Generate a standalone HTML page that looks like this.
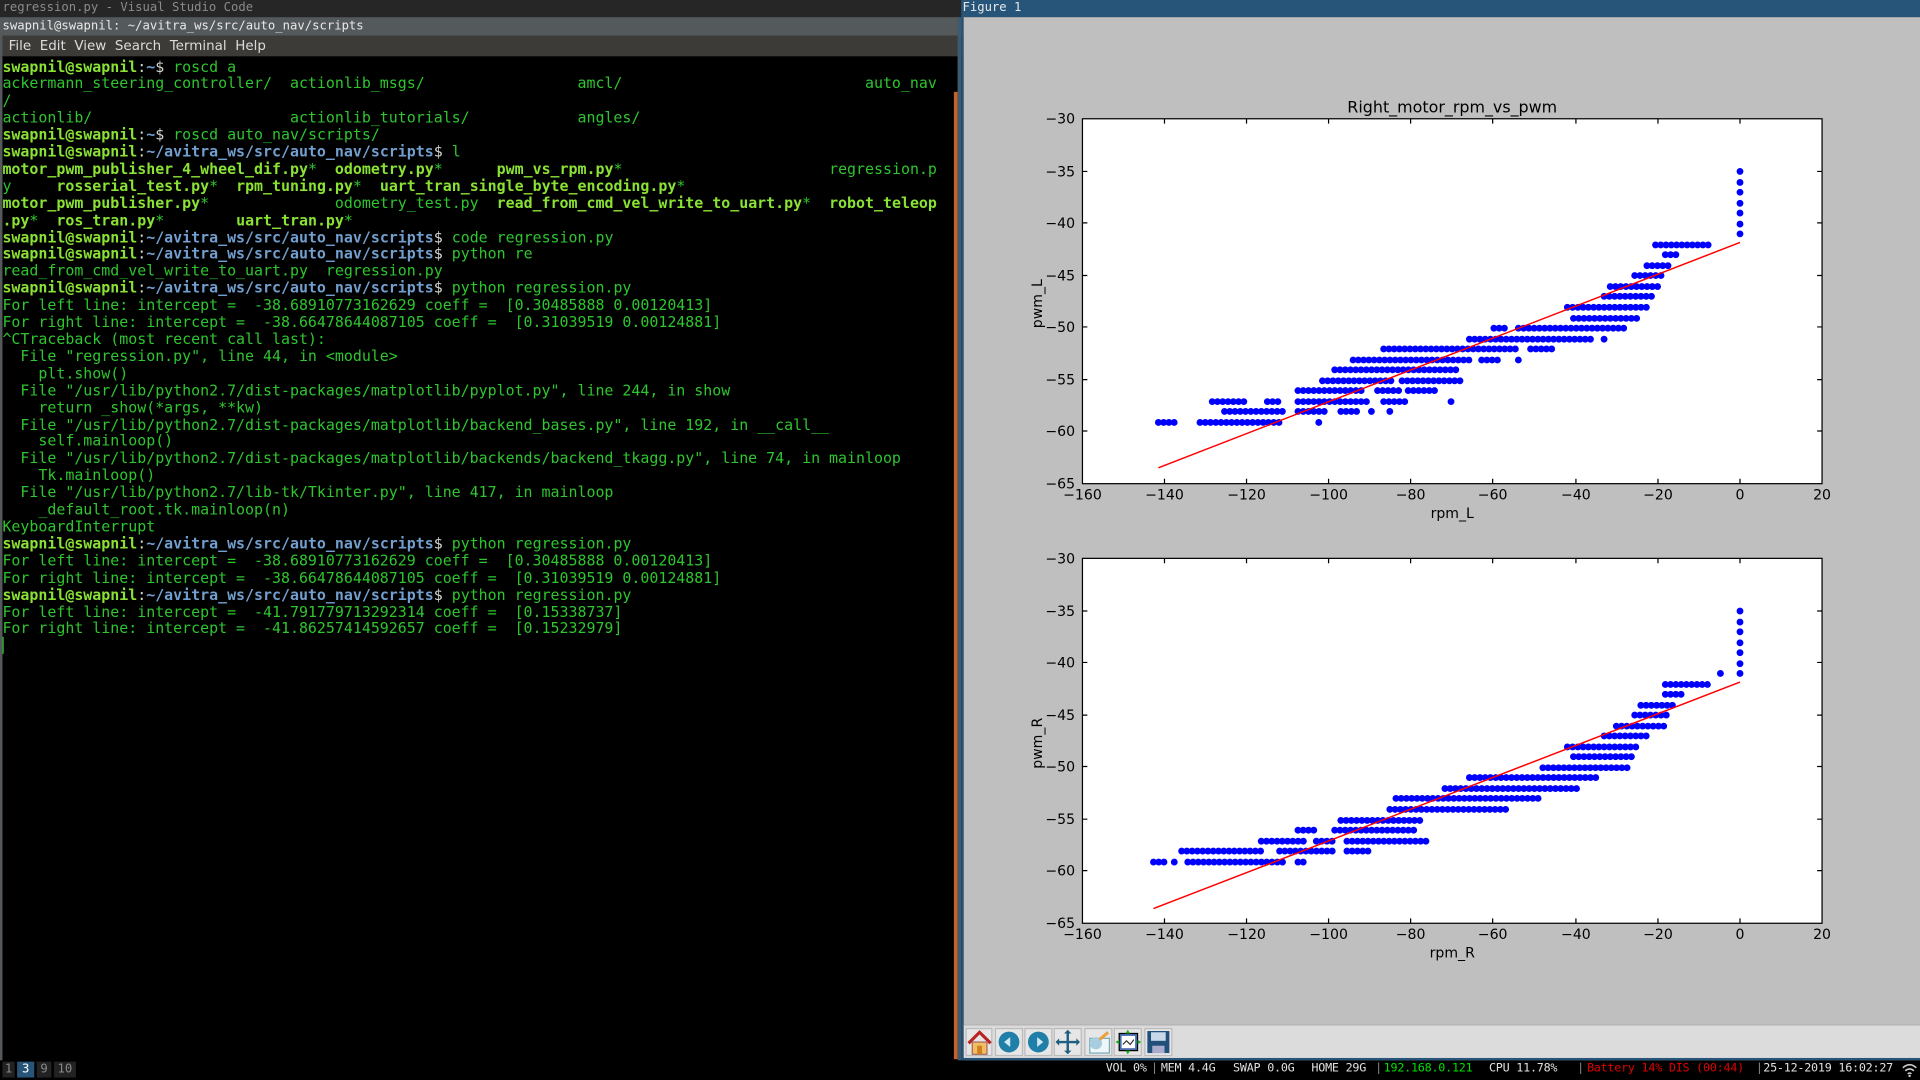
<!DOCTYPE html>
<html><head><meta charset="utf-8"><style>
html,body{margin:0;padding:0;background:#000;overflow:hidden;width:1920px;height:1080px}
#w{position:absolute;left:0;top:0;width:1568px;height:882px;transform:scale(1.224490);transform-origin:0 0;background:#000;font-family:"DejaVu Sans Mono","Liberation Mono",monospace}
.abs{position:absolute}
#term pre{margin:0;position:absolute;left:2px;top:48.5px;font-family:"DejaVu Sans Mono",monospace;font-size:12.2px;line-height:13.9px;color:#2fc52f;white-space:pre}
.p{color:#8ae234;font-weight:bold}.b{color:#729fcf;font-weight:bold}.y{color:#8ae234;font-weight:bold}.w{color:#d3d7cf}
#st span{position:absolute;top:867px;font-size:9.6px;color:#e0e0e0;letter-spacing:-0.2px}
</style></head><body><div id="w">
<div class="abs" style="left:0;top:0;width:785px;height:14px;background:#262626;color:#8a8a8a;font-size:10px;line-height:14px;padding-left:2px">regression.py - Visual Studio Code</div>
<div class="abs" style="left:0;top:14px;width:785px;height:15px;background:#545a5c;color:#e8e8e8;font-size:10px;line-height:15px;padding-left:2px">swapnil@swapnil: ~/avitra_ws/src/auto_nav/scripts</div>
<div class="abs" style="left:0;top:29px;width:783px;height:17px;background:#3c3b37;border-left:2px solid #545a5c;color:#dcdcdc;font-family:'DejaVu Sans',sans-serif;font-size:11px;line-height:17px"><span style="margin-left:5px">File</span>&nbsp; Edit&nbsp; View&nbsp; Search&nbsp; Terminal&nbsp; Help</div>
<div class="abs" style="left:0;top:46px;width:2px;height:820px;background:#545a5c"></div>
<div class="abs" style="left:779px;top:75px;width:3px;height:790px;background:#c8602a"></div>
<div class="abs" style="left:782px;top:14px;width:3px;height:852px;background:#3d5a6e"></div>
<div id="term"><pre><span class="p">swapnil@swapnil</span><span class="w">:</span><span class="b">~</span><span class="w">$ </span>roscd a
ackermann_steering_controller/  actionlib_msgs/                 amcl/                           auto_nav
/
actionlib/                      actionlib_tutorials/            angles/
<span class="p">swapnil@swapnil</span><span class="w">:</span><span class="b">~</span><span class="w">$ </span>roscd auto_nav/scripts/
<span class="p">swapnil@swapnil</span><span class="w">:</span><span class="b">~/avitra_ws/src/auto_nav/scripts</span><span class="w">$ </span>l
<span class="y">motor_pwm_publisher_4_wheel_dif.py</span>*  <span class="y">odometry.py</span>*      <span class="y">pwm_vs_rpm.py</span>*                       regression.p
y     <span class="y">rosserial_test.py</span>*  <span class="y">rpm_tuning.py</span>*  <span class="y">uart_tran_single_byte_encoding.py</span>*
<span class="y">motor_pwm_publisher.py</span>*              odometry_test.py  <span class="y">read_from_cmd_vel_write_to_uart.py</span>*  <span class="y">robot_teleop</span>
<span class="y">.py</span>*  <span class="y">ros_tran.py</span>*        <span class="y">uart_tran.py</span>*
<span class="p">swapnil@swapnil</span><span class="w">:</span><span class="b">~/avitra_ws/src/auto_nav/scripts</span><span class="w">$ </span>code regression.py
<span class="p">swapnil@swapnil</span><span class="w">:</span><span class="b">~/avitra_ws/src/auto_nav/scripts</span><span class="w">$ </span>python re
read_from_cmd_vel_write_to_uart.py  regression.py
<span class="p">swapnil@swapnil</span><span class="w">:</span><span class="b">~/avitra_ws/src/auto_nav/scripts</span><span class="w">$ </span>python regression.py
For left line: intercept =  -38.68910773162629 coeff =  [0.30485888 0.00120413]
For right line: intercept =  -38.66478644087105 coeff =  [0.31039519 0.00124881]
^CTraceback (most recent call last):
  File "regression.py", line 44, in &lt;module&gt;
    plt.show()
  File "/usr/lib/python2.7/dist-packages/matplotlib/pyplot.py", line 244, in show
    return _show(*args, **kw)
  File "/usr/lib/python2.7/dist-packages/matplotlib/backend_bases.py", line 192, in __call__
    self.mainloop()
  File "/usr/lib/python2.7/dist-packages/matplotlib/backends/backend_tkagg.py", line 74, in mainloop
    Tk.mainloop()
  File "/usr/lib/python2.7/lib-tk/Tkinter.py", line 417, in mainloop
    _default_root.tk.mainloop(n)
KeyboardInterrupt
<span class="p">swapnil@swapnil</span><span class="w">:</span><span class="b">~/avitra_ws/src/auto_nav/scripts</span><span class="w">$ </span>python regression.py
For left line: intercept =  -38.68910773162629 coeff =  [0.30485888 0.00120413]
For right line: intercept =  -38.66478644087105 coeff =  [0.31039519 0.00124881]
<span class="p">swapnil@swapnil</span><span class="w">:</span><span class="b">~/avitra_ws/src/auto_nav/scripts</span><span class="w">$ </span>python regression.py
For left line: intercept =  -41.791779713292314 coeff =  [0.15338737]
For right line: intercept =  -41.86257414592657 coeff =  [0.15232979]
<span style="border-left:1px solid #2fc52f"> </span></pre></div>

<div class="abs" style="left:785px;top:0;width:783px;height:14px;background:#27557a;color:#e8e8e8;font-size:10px;line-height:14px"><span style="margin-left:1px">Figure 1</span></div>
<div class="abs" style="left:785px;top:14px;width:2px;height:852px;background:#27557a"></div>
<div class="abs" style="left:787px;top:14px;width:781px;height:823px;background:#bfbfbf"></div>
<div class="abs" style="left:787px;top:837px;width:781px;height:28px;background:#dcdcdc;border-top:1px solid #c8c8c8"></div>
<div class="abs" style="left:785px;top:864px;width:783px;height:2px;background:#27557a"></div>

<svg class="abs" style="left:0;top:0" width="1568" height="882" viewBox="0 0 1568 882" font-family="DejaVu Sans, Liberation Sans, sans-serif">
<g id="ax1">
<rect x="884" y="97" width="604" height="298" fill="#fff" stroke="#000" stroke-width="1"/>
<text x="1186" y="92" font-size="13" text-anchor="middle">Right_motor_rpm_vs_pwm</text>
<g font-size="11.5" text-anchor="end">
<text x="878" y="101">−30</text><text x="878" y="144">−35</text><text x="878" y="186">−40</text><text x="878" y="229">−45</text><text x="878" y="271">−50</text><text x="878" y="314">−55</text><text x="878" y="356">−60</text><text x="878" y="399">−65</text></g>
<g font-size="11.5" text-anchor="middle">
<text x="884" y="408">−160</text><text x="951" y="408">−140</text><text x="1018" y="408">−120</text><text x="1085" y="408">−100</text><text x="1152" y="408">−80</text><text x="1219" y="408">−60</text><text x="1287" y="408">−40</text><text x="1354" y="408">−20</text><text x="1421" y="408">0</text><text x="1488" y="408">20</text></g>
<text x="1186" y="423" font-size="11.5" text-anchor="middle">rpm_L</text>
<text transform="translate(851,248) rotate(-90)" font-size="11.5" text-anchor="middle">pwm_L</text>
<g stroke="#000" stroke-width="1">
<path d="M951 97v4M1018 97v4M1085 97v4M1152 97v4M1219 97v4M1287 97v4M1354 97v4M1421 97v4M951 395v-4M1018 395v-4M1085 395v-4M1152 395v-4M1219 395v-4M1287 395v-4M1354 395v-4M1421 395v-4M884 140h4M884 182h4M884 225h4M884 267h4M884 310h4M884 352h4M1488 140h-4M1488 182h-4M1488 225h-4M1488 267h-4M1488 310h-4M1488 352h-4"/></g>
<g stroke="#0000ff" stroke-width="5.6" stroke-linecap="round" fill="none" stroke-dasharray="0 4.3">
<path d="M946 345H960M980 345H1045M1077 345h0.1M1000 336H1050M1060 336H1085M1095 336H1110M1120 336h0.1M1135 336h0.1M990 328H1020M1035 328H1045M1060 328H1120M1130 328H1150M1185 328h0.1M1060 319H1115M1125 319H1145M1150 319H1175M1080 311H1140M1145 311H1195M1090 302H1190M1105 294H1200M1210 294H1225M1240 294h0.1M1130 285H1240M1250 285H1270M1200 277H1300M1310 277h0.1M1220 268H1230M1240 268H1330M1285 260H1340M1280 251H1345M1310 242H1350M1315 234H1355M1335 225H1360M1345 217H1365M1360 208H1370M1352 200H1398M1421 191h0.1M1421 183h0.1M1421 174h0.1M1421 166h0.1M1421 157h0.1M1421 149h0.1M1421 140h0.1"/></g>
<path d="M946 382L1421 198" stroke="#ff0000" stroke-width="1.2"/>
</g>
<g transform="translate(0,359)">
<rect x="884" y="97" width="604" height="298" fill="#fff" stroke="#000" stroke-width="1"/>
<g font-size="11.5" text-anchor="end">
<text x="878" y="101">−30</text><text x="878" y="144">−35</text><text x="878" y="186">−40</text><text x="878" y="229">−45</text><text x="878" y="271">−50</text><text x="878" y="314">−55</text><text x="878" y="356">−60</text><text x="878" y="399">−65</text></g>
<g font-size="11.5" text-anchor="middle">
<text x="884" y="408">−160</text><text x="951" y="408">−140</text><text x="1018" y="408">−120</text><text x="1085" y="408">−100</text><text x="1152" y="408">−80</text><text x="1219" y="408">−60</text><text x="1287" y="408">−40</text><text x="1354" y="408">−20</text><text x="1421" y="408">0</text><text x="1488" y="408">20</text></g>
<text x="1186" y="423" font-size="11.5" text-anchor="middle">rpm_R</text>
<text transform="translate(851,248) rotate(-90)" font-size="11.5" text-anchor="middle">pwm_R</text>
<g stroke="#000" stroke-width="1">
<path d="M951 97v4M1018 97v4M1085 97v4M1152 97v4M1219 97v4M1287 97v4M1354 97v4M1421 97v4M951 395v-4M1018 395v-4M1085 395v-4M1152 395v-4M1219 395v-4M1287 395v-4M1354 395v-4M1421 395v-4M884 140h4M884 182h4M884 225h4M884 267h4M884 310h4M884 352h4M1488 140h-4M1488 182h-4M1488 225h-4M1488 267h-4M1488 310h-4M1488 352h-4"/></g>
<g stroke="#0000ff" stroke-width="5.6" stroke-linecap="round" fill="none" stroke-dasharray="0 4.3">
<path d="M942 345H952M959 345h0.1M970 345H1048M1060 345H1066M965 336H1030M1045 336H1090M1100 336H1120M1030 328H1065M1075 328H1090M1100 328H1165M1060 319H1075M1090 319H1155M1095 311H1160M1135 302H1230M1140 293H1260M1180 285H1290M1200 276H1305M1260 268H1330M1285 259H1335M1280 251H1340M1310 242H1345M1320 234H1360M1335 225H1365M1340 217H1370M1360 208H1375M1360 200H1395M1405 191h0.1M1421 191h0.1M1421 183h0.1M1421 174h0.1M1421 166h0.1M1421 157h0.1M1421 149h0.1M1421 140h0.1"/></g>
<path d="M942 383L1421 198" stroke="#ff0000" stroke-width="1.2"/>
</g>
<g>
<rect x="789" y="840" width="21" height="22" fill="#e6e6e6" stroke="#bbb"/>
<path d="M791 852L800 843L809 852" stroke="#b22" stroke-width="2.5" fill="none"/><rect x="794" y="851" width="12" height="10" fill="#f0c060" stroke="#a66"/><rect x="798" y="854" width="4" height="7" fill="#d08020"/>
<rect x="813" y="840" width="22" height="22" fill="#e6e6e6" stroke="#bbb"/>
<circle cx="824" cy="851" r="8.5" fill="#1f7fa8"/><path d="M820 851l5-4v8z" fill="#cfe8f2"/>
<rect x="837" y="840" width="22" height="22" fill="#e6e6e6" stroke="#bbb"/>
<circle cx="848" cy="851" r="8.5" fill="#1f7fa8"/><path d="M852 851l-5-4v8z" fill="#cfe8f2"/>
<rect x="861" y="840" width="22" height="22" fill="#e6e6e6" stroke="#bbb"/>
<path d="M872 842v18M863 851h18" stroke="#1f5f80" stroke-width="2"/><path d="M872 841l-3 3h6zM872 861l-3-3h6zM862 851l3-3v6zM882 851l-3-3v6z" fill="#1f5f80"/>
<rect x="886" y="840" width="22" height="22" fill="#e6e6e6" stroke="#bbb"/>
<rect x="890" y="848" width="16" height="12" fill="#eef6fa" stroke="#7ab"/><circle cx="895" cy="852" r="5" fill="#a8cde0"/><path d="M898 849l7-6" stroke="#e8a040" stroke-width="2.5"/>
<rect x="910" y="840" width="22" height="22" fill="#e6e6e6" stroke="#bbb"/>
<rect x="914" y="844" width="15" height="14" fill="#4a6fb0" stroke="#000"/><rect x="916" y="846" width="11" height="10" fill="#fff"/><path d="M917 853l3-3 3 3 3-4" stroke="#333" fill="none"/><path d="M921 841l-2 3h4zM921 861l-2-3h4zM911 851l3-2v4zM932 851l-3-2v4z" fill="#2a2"/>
<rect x="935" y="840" width="22" height="22" fill="#e6e6e6" stroke="#bbb"/>
<rect x="937" y="842" width="18" height="18" fill="#1f4f7a"/><rect x="940" y="843" width="12" height="7" fill="#c8d8e8"/><rect x="941" y="854" width="10" height="6" fill="#aac"/>
</g>
</svg>

<div class="abs" style="left:0;top:866px;width:1568px;height:16px;background:#000"></div>
<div class="abs" style="left:2px;top:867px;width:10px;height:13px;background:#222;color:#888;font-size:10px;line-height:13px;text-align:center">1</div>
<div class="abs" style="left:14px;top:867px;width:14px;height:13px;background:#285577;color:#fff;font-size:10px;line-height:13px;text-align:center">3</div>
<div class="abs" style="left:30px;top:867px;width:12px;height:13px;background:#222;color:#888;font-size:10px;line-height:13px;text-align:center">9</div>
<div class="abs" style="left:44px;top:867px;width:18px;height:13px;background:#222;color:#888;font-size:10px;line-height:13px;text-align:center">10</div>
<div id="st">
<span style="left:903px">VOL 0%</span><span style="left:940px;color:#888">|</span>
<span style="left:948px">MEM 4.4G</span><span style="left:1007px">SWAP 0.0G</span><span style="left:1071px">HOME 29G</span><span style="left:1123px;color:#888">|</span>
<span style="left:1130px;color:#00e000">192.168.0.121</span><span style="left:1216px">CPU 11.78%</span><span style="left:1288px;color:#888">|</span>
<span style="left:1296px;color:#e00000">Battery 14% DIS (00:44)</span><span style="left:1434px;color:#888">|</span>
<span style="left:1440px">25-12-2019 16:02:27</span>
</div>
<svg class="abs" style="left:1553px;top:868px" width="13" height="12" viewBox="0 0 13 12"><path d="M1 4q5.5-5 11 0M3 6.5q3.5-3 7 0M5 9q1.5-1.3 3 0" stroke="#ccc" stroke-width="1.3" fill="none"/><circle cx="6.5" cy="10.7" r="1" fill="#ccc"/></svg>
</div></body></html>
